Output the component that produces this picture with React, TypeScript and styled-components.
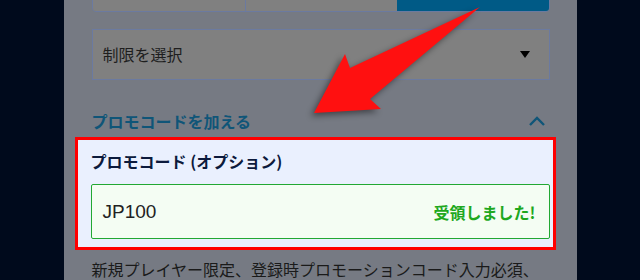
import React from "react";
import styled, { createGlobalStyle } from "styled-components";

const GlobalStyle = createGlobalStyle`
  html, body {
    margin: 0;
    padding: 0;
    background-color: #000a1c;
  }

  body {
    font-family: "Noto Sans CJK JP", "Noto Sans", sans-serif;
  }
`;

const Page = styled.div`
  position: relative;
  width: 640px;
  height: 280px;
  overflow: hidden;
  display: flex;
  justify-content: center;
  background-color: #000a1c;
`;

const Panel = styled.div`
  width: 513px;
  padding: 0 27px 0 28px;
  box-sizing: border-box;
  background-color: #767a83;
  display: flex;
  flex-direction: column;
`;

const TabRow = styled.div`
  margin-top: -31px;
  height: 44px;
  display: grid;
  grid-template-columns: 1fr 1fr 1fr;
  border: 1px solid #6b7aa0;
  border-radius: 0 0 4px 4px;
  box-sizing: border-box;
  overflow: hidden;
`;

const Tab = styled.div<{ $active?: boolean }>`
  background-color: ${({ $active }) => ($active ? "#005a86" : "#808080")};
  border-left: ${({ $active }) => ($active ? "none" : "1px solid #6b7aa0")};

  &:first-child {
    border-left: none;
  }
`;

const Select = styled.div`
  margin-top: 17px;
  height: 52px;
  box-sizing: border-box;
  border: 1px solid #6b7aa0;
  background-color: #808080;
  display: flex;
  align-items: center;
  justify-content: space-between;
  padding: 0 19px 0 10px;
  font-size: 16px;
  color: #1e1e1e;
`;

const Caret = styled.span`
  width: 0;
  height: 0;
  border-left: 5px solid transparent;
  border-right: 5px solid transparent;
  border-top: 7px solid #000;
`;

const PromoHeader = styled.div`
  margin-top: 26px;
  height: 32px;
  display: flex;
  align-items: center;
  justify-content: space-between;
  font-size: 16px;
  font-weight: 700;
  color: #0f5578;
`;

const Chevron = styled.svg`
  width: 18px;
  height: 12px;
  margin-right: 4px;
`;

const PromoBox = styled.div`
  margin: 0 -6px 0 -17px;
  border: 3px solid #ff0000;
  background-color: #eaf0fe;
  padding: 10px 3px 8px 13px;
`;

const PromoLabel = styled.div`
  font-size: 16px;
  font-weight: 700;
  line-height: 22px;
  color: #0c1a3c;
`;

const PromoInput = styled.div`
  margin-top: 12px;
  height: 55px;
  box-sizing: border-box;
  border: 1px solid #22a833;
  border-radius: 2px;
  background-color: #f4fdf3;
  display: flex;
  align-items: center;
  justify-content: space-between;
  padding: 0 13px 0 11px;
`;

const Code = styled.span`
  font-family: "Liberation Sans", Arial, sans-serif;
  font-size: 19px;
  color: #222;
`;

const Applied = styled.span`
  font-size: 16px;
  font-weight: 700;
  color: #1ea81e;
`;

const Note = styled.p`
  margin: 8px 0 0;
  font-size: 16px;
  line-height: 22px;
  color: #1a1a1a;
  white-space: nowrap;
`;

const Arrow = styled.svg`
  position: absolute;
  left: 0;
  top: 0;
  width: 640px;
  height: 280px;
  pointer-events: none;
  filter: drop-shadow(-3px 3px 3px rgba(0, 0, 0, 0.45));
`;

const App: React.FC = () => {
  return (
    <Page>
      <GlobalStyle />
      <Panel>
        <TabRow>
          <Tab />
          <Tab />
          <Tab $active />
        </TabRow>
        <Select>
          <span>制限を選択</span>
          <Caret />
        </Select>
        <PromoHeader>
          <span>プロモコードを加える</span>
          <Chevron viewBox="0 0 18 12">
            <path d="M2 10 L9 3 L16 10" fill="none" stroke="#0f5578" strokeWidth="2.4" />
          </Chevron>
        </PromoHeader>
        <PromoBox>
          <PromoLabel>プロモコード (オプション)</PromoLabel>
          <PromoInput>
            <Code>JP100</Code>
            <Applied>受領しました!</Applied>
          </PromoInput>
        </PromoBox>
        <Note>新規プレイヤー限定、登録時プロモーションコード入力必須、</Note>
      </Panel>
      <Arrow viewBox="0 0 640 280">
        <polygon points="480,7 350,68 345,54 314,113 381,109 370,99" fill="#ff1010" />
      </Arrow>
    </Page>
  );
};

export default App;
